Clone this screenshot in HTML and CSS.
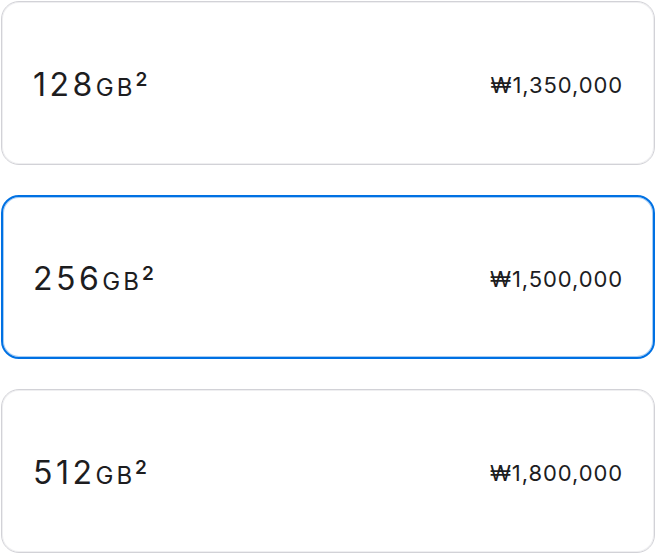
FILE: index.html
```html
<!DOCTYPE html>
<html lang="ko">
<head>
<meta charset="utf-8">
<title>저장 용량</title>
<link rel="stylesheet" href="styles.css">
</head>
<body>
<div class="options">
  <div class="option">
    <span class="capacity"><span class="num">128</span><span class="unit">GB</span><sup class="note">2</sup></span>
    <span class="price">₩1,350,000</span>
  </div>
  <div class="option selected">
    <span class="capacity"><span class="num">256</span><span class="unit">GB</span><sup class="note">2</sup></span>
    <span class="price">₩1,500,000</span>
  </div>
  <div class="option">
    <span class="capacity"><span class="num">512</span><span class="unit">GB</span><sup class="note">2</sup></span>
    <span class="price">₩1,800,000</span>
  </div>
</div>
</body>
</html>
```
FILE: styles.css
```css
html, body {
  margin: 0;
  padding: 0;
  background: #fff;
}
body {
  font-family: Inter, "Noto Sans CJK KR", sans-serif;
  color: #1d1d1f;
}
.options {
  display: flex;
  flex-direction: column;
  gap: 30px;
  padding: 1px 2px 0 1px;
}
.option {
  box-sizing: border-box;
  height: 164px;
  border: 1px solid #d2d2d7;
  border-radius: 18px;
  box-shadow: inset 0 0 0 1px rgba(210, 210, 215, 0.35);
  display: flex;
  align-items: center;
  justify-content: space-between;
  padding: 0 31px 0 31px;
}
.option.selected {
  border: 2px solid #0071e3;
  box-shadow: inset 0 0 0 1px rgba(0, 113, 227, 0.35);
  padding: 0 30px 0 30px;
}
.capacity {
  display: flex;
  align-items: baseline;
  margin-top: 3px;
}
.num {
  font-size: 32px;
  letter-spacing: 3.5px;
}
.unit {
  font-size: 24px;
  letter-spacing: 3px;
}
.note {
  font-size: 19px;
  align-self: flex-start;
  margin-top: 3px;
  font-weight: 600;
}
.price {
  font-size: 22px;
  letter-spacing: 0.9px;
  margin-top: 3px;
  color: #1d1d1f;
}
```
